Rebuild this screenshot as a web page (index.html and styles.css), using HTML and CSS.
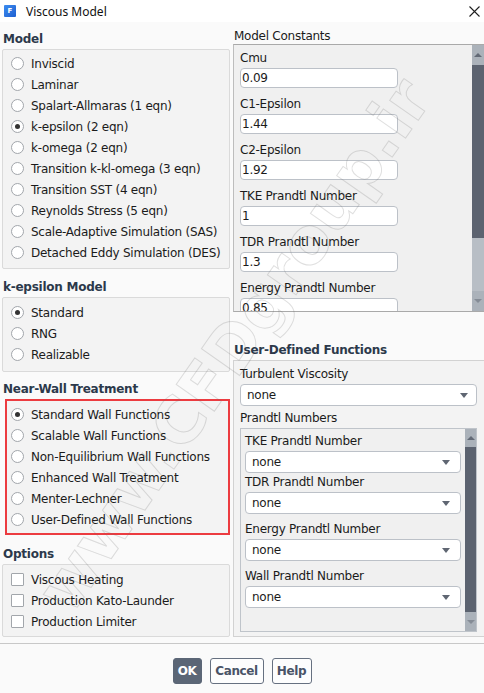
FILE: index.html
```html
<!DOCTYPE html>
<html lang="en">
<head>
<meta charset="utf-8">
<title>Viscous Model</title>
<link rel="stylesheet" href="styles.css">
</head>
<body>
<div class="dialog">
  <header class="titlebar">
    <span class="app-icon">F</span>
    <span class="title">Viscous Model</span>
    <svg class="close" width="11" height="11" viewBox="0 0 11 11" aria-label="Close"><path d="M0.5 0.5L10.5 10.5M10.5 0.5L0.5 10.5" stroke="#1f1f1f" stroke-width="1.1" fill="none"/></svg>
  </header>

  <div class="content">
    <div class="col-left">
      <section class="group">
        <h2 class="group-title">Model</h2>
        <div class="group-box model-box">
          <label class="choice"><span class="radio"></span>Inviscid</label>
          <label class="choice"><span class="radio"></span>Laminar</label>
          <label class="choice"><span class="radio"></span>Spalart-Allmaras (1 eqn)</label>
          <label class="choice"><span class="radio checked"></span>k-epsilon (2 eqn)</label>
          <label class="choice"><span class="radio"></span>k-omega (2 eqn)</label>
          <label class="choice"><span class="radio"></span>Transition k-kl-omega (3 eqn)</label>
          <label class="choice"><span class="radio"></span>Transition SST (4 eqn)</label>
          <label class="choice"><span class="radio"></span>Reynolds Stress (5 eqn)</label>
          <label class="choice"><span class="radio"></span>Scale-Adaptive Simulation (SAS)</label>
          <label class="choice"><span class="radio"></span>Detached Eddy Simulation (DES)</label>
        </div>
      </section>

      <section class="group keps">
        <h2 class="group-title">k-epsilon Model</h2>
        <div class="group-box keps-box">
          <label class="choice"><span class="radio checked"></span>Standard</label>
          <label class="choice"><span class="radio"></span>RNG</label>
          <label class="choice"><span class="radio"></span>Realizable</label>
        </div>
      </section>

      <section class="group wall">
        <h2 class="group-title">Near-Wall Treatment</h2>
        <div class="group-box wall-box highlighted">
          <label class="choice"><span class="radio checked"></span>Standard Wall Functions</label>
          <label class="choice"><span class="radio"></span>Scalable Wall Functions</label>
          <label class="choice"><span class="radio"></span>Non-Equilibrium Wall Functions</label>
          <label class="choice"><span class="radio"></span>Enhanced Wall Treatment</label>
          <label class="choice"><span class="radio"></span>Menter-Lechner</label>
          <label class="choice"><span class="radio"></span>User-Defined Wall Functions</label>
        </div>
      </section>

      <section class="group options">
        <h2 class="group-title">Options</h2>
        <div class="group-box options-box">
          <label class="choice"><span class="check"></span>Viscous Heating</label>
          <label class="choice"><span class="check"></span>Production Kato-Launder</label>
          <label class="choice"><span class="check"></span>Production Limiter</label>
        </div>
      </section>
    </div>

    <div class="col-right">
      <section class="constants">
        <h3 class="plain-title">Model Constants</h3>
        <div class="scroll-panel constants-panel">
          <div class="scroll-body constants-body">
            <div class="field"><label>Cmu</label><input class="num" type="text" value="0.09"></div>
            <div class="field"><label>C1-Epsilon</label><input class="num" type="text" value="1.44"></div>
            <div class="field"><label>C2-Epsilon</label><input class="num" type="text" value="1.92"></div>
            <div class="field"><label>TKE Prandtl Number</label><input class="num" type="text" value="1"></div>
            <div class="field"><label>TDR Prandtl Number</label><input class="num" type="text" value="1.3"></div>
            <div class="field"><label>Energy Prandtl Number</label><input class="num" type="text" value="0.85"></div>
          </div>
          <div class="scrollbar big">
            <span class="sb-btn up"></span>
            <span class="sb-thumb"></span>
            <span class="sb-track"></span>
            <span class="sb-btn down"></span>
          </div>
        </div>
      </section>

      <section class="udf">
        <h2 class="group-title">User-Defined Functions</h2>
        <div class="udf-box">
          <div class="udf-label">Turbulent Viscosity</div>
          <div class="select wide"><span>none</span><svg class="caret" width="8" height="5" viewBox="0 0 8 5"><path d="M0 0H8L4 5Z" fill="#5f6672"/></svg></div>
          <div class="udf-label sub">Prandtl Numbers</div>
          <div class="scroll-panel prandtl-panel">
            <div class="scroll-body prandtl-body">
              <div class="pfield"><div class="plabel">TKE Prandtl Number</div><div class="select"><span>none</span><svg class="caret" width="8" height="5" viewBox="0 0 8 5"><path d="M0 0H8L4 5Z" fill="#5f6672"/></svg></div></div>
              <div class="pfield tight"><div class="plabel">TDR Prandtl Number</div><div class="select"><span>none</span><svg class="caret" width="8" height="5" viewBox="0 0 8 5"><path d="M0 0H8L4 5Z" fill="#5f6672"/></svg></div></div>
              <div class="pfield"><div class="plabel">Energy Prandtl Number</div><div class="select"><span>none</span><svg class="caret" width="8" height="5" viewBox="0 0 8 5"><path d="M0 0H8L4 5Z" fill="#5f6672"/></svg></div></div>
              <div class="pfield"><div class="plabel">Wall Prandtl Number</div><div class="select"><span>none</span><svg class="caret" width="8" height="5" viewBox="0 0 8 5"><path d="M0 0H8L4 5Z" fill="#5f6672"/></svg></div></div>
            </div>
            <div class="scrollbar small">
              <span class="sb-btn up"></span>
              <span class="sb-thumb"></span>
              <span class="sb-btn down"></span>
            </div>
          </div>
        </div>
      </section>
    </div>
  </div>

  <footer class="actions">
    <button class="btn primary btn-ok" type="button">OK</button>
    <button class="btn btn-cancel" type="button">Cancel</button>
    <button class="btn btn-help" type="button">Help</button>
  </footer>

  <div class="watermark">www.CFDgroup.ir</div>
</div>
</body>
</html>
```

FILE: styles.css
```css
* { box-sizing: border-box; }

html, body {
  margin: 0;
  padding: 0;
}

body {
  width: 484px;
  height: 693px;
  overflow: hidden;
  background: #fafafa;
  font-family: "DejaVu Sans", Verdana, sans-serif;
  font-size: 12px;
  letter-spacing: -0.25px;
  color: #1b1b1b;
}

.dialog {
  position: relative;
  width: 484px;
  height: 693px;
  overflow: hidden;
}

/* ---------- title bar ---------- */
.titlebar {
  height: 22px;
  background: #ffffff;
  display: flex;
  align-items: center;
  letter-spacing: 0;
}

.app-icon {
  width: 12px;
  height: 12px;
  margin-left: 4px;
  border-radius: 1px;
  background: linear-gradient(135deg, #3b8cf0 0%, #1f5fd0 100%);
  color: #fff;
  font: bold 7px/12px "DejaVu Sans", sans-serif;
  text-align: center;
}

.title {
  margin-left: 10px;
  font-family: "Noto Sans", "Open Sans", sans-serif;
  font-size: 12px;
  color: #111;
}

.close {
  margin-left: auto;
  margin-right: 4px;
}

/* ---------- two columns ---------- */
.content {
  display: grid;
  grid-template-columns: 228px 251px;
  column-gap: 3px;
  padding: 7px 0 0 2px;
}

.col-left,
.col-right {
  display: flex;
  flex-direction: column;
}

.group-title {
  margin: 0;
  padding-left: 1px;
  font-size: 12px;
  font-weight: bold;
  line-height: 20px;
  color: #2c394b;
}

.group-box {
  background: #f3f3f3;
  border: 1px solid #dadada;
  border-radius: 2px;
}

.model-box { padding: 3px 0 5px; }
.keps { margin-top: 8px; }
.keps-box { padding: 4px 0 6px; }
.wall { margin-top: 7px; }
.wall-box { padding: 3px 0; margin-left: 3px; }
.options { margin-top: 9px; }
.options-box { padding: 4px 0; }

.group-box.highlighted {
  border: 2px solid #ec3b40;
  border-radius: 0;
}

.choice {
  display: flex;
  align-items: center;
  height: 21px;
  padding-left: 8px;
  white-space: nowrap;
}

.highlighted .choice { padding-left: 4px; }

.radio,
.check {
  flex: none;
  width: 13px;
  height: 13px;
  margin-right: 7px;
  background: #fff;
  border: 1px solid #a2a6ab;
}

.radio {
  border-radius: 50%;
  display: flex;
  align-items: center;
  justify-content: center;
}

.radio.checked::after {
  content: "";
  width: 5px;
  height: 5px;
  border-radius: 50%;
  background: #333;
}

.check { border-radius: 1px; }

/* ---------- model constants ---------- */
.plain-title {
  margin: 0;
  padding-left: 1px;
  font-size: 12px;
  font-weight: normal;
  line-height: 15px;
  color: #1b1b1b;
}

.scroll-panel {
  display: flex;
  overflow: hidden;
}

.scroll-body {
  flex: 1;
  overflow: hidden;
}

.constants-panel {
  height: 268px;
  background: #f0f0f0;
  border-top: 1px solid #a9a9a9;
  border-bottom: 1px solid #a9a9a9;
  border-left: 1px solid #bdbdbd;
}

.constants-body { padding: 3px 0 0 6px; }

.field {
  display: flex;
  flex-direction: column;
  align-items: flex-start;
  margin-bottom: 6px;
}

.field label { line-height: 20px; }

.num {
  width: 158px;
  height: 20px;
  margin: 0;
  padding: 0 1px;
  border: 1px solid #bcc1c8;
  border-radius: 4px;
  background: #fff;
  font: 12px "DejaVu Sans", Verdana, sans-serif;
  letter-spacing: -0.25px;
  color: #1b1b1b;
}

/* ---------- scrollbars ---------- */
.scrollbar {
  flex: none;
  display: flex;
  flex-direction: column;
  background: #b8bec5;
}

.scrollbar.big { width: 12px; }
.scrollbar.small { width: 11px; }

.sb-btn {
  flex: none;
  display: flex;
  align-items: center;
  justify-content: center;
  background: #abb2ba;
}

.big .sb-btn { height: 20px; }
.small .sb-btn.up { height: 18px; }
.small .sb-btn.down { height: 19px; }

.sb-btn::after {
  content: "";
  border-left: 4px solid transparent;
  border-right: 4px solid transparent;
}

.sb-btn.up::after { border-bottom: 4px solid #636a76; }
.sb-btn.down::after { border-top: 4px solid #858c96; }

.sb-thumb {
  flex: none;
  background: #5c6370;
}

.big .sb-thumb { height: 173px; }
.small .sb-thumb { flex: 1; }

.sb-track { flex: 1; }

/* ---------- user-defined functions ---------- */
.udf { margin-top: 28px; }

.udf-box {
  height: 277px;
  background: #f3f3f3;
  border-top: 1px solid #d2d2d2;
  border-bottom: 1px solid #d2d2d2;
  border-left: 1px solid #d2d2d2;
  padding: 3px 6px 4px 6px;
}

.udf-label { line-height: 20px; }
.udf-label.sub { margin-top: 3px; line-height: 19px; }

.select {
  display: flex;
  align-items: center;
  justify-content: space-between;
  height: 22px;
  width: 216px;
  padding: 0 10px 0 6px;
  background: #fff;
  border: 1px solid #bcc1c8;
  border-radius: 4px;
}

.select.wide {
  width: 237px;
  padding-right: 8px;
}

.prandtl-panel {
  height: 204px;
  width: 237px;
  background: #f0f0f0;
  border: 1px solid #bfc4ca;
}

.prandtl-body { padding: 3px 0 0 4px; }

.pfield + .pfield { margin-top: 6px; }
.pfield.tight { margin-top: 0; }

.plabel { line-height: 18px; margin-bottom: 1px; }

/* ---------- buttons ---------- */
.actions {
  margin-top: 6px;
  border-top: 1px solid #c8c8c8;
  padding-top: 14px;
  display: flex;
  justify-content: center;
  gap: 8px;
}

.btn {
  height: 26px;
  padding: 0;
  border: 1px solid #667080;
  border-radius: 3px;
  background: #fdfdfd;
  font: bold 12px "DejaVu Sans", Verdana, sans-serif;
  letter-spacing: -0.4px;
  color: #4a5467;
}

.btn-ok { width: 29px; }
.btn-cancel { width: 54px; }
.btn-help { width: 40px; }

.btn.primary {
  background: #5b6676;
  border-color: #5b6676;
  color: #fff;
}

/* ---------- watermark ---------- */
.watermark {
  position: absolute;
  left: 234px;
  top: 345px;
  transform: translate(-50%, -50%) rotate(-55deg);
  white-space: nowrap;
  font: bold 64px "DejaVu Sans", sans-serif;
  letter-spacing: 0;
  color: transparent;
  -webkit-text-stroke: 1px rgba(110, 110, 110, 0.22);
  pointer-events: none;
}
```
